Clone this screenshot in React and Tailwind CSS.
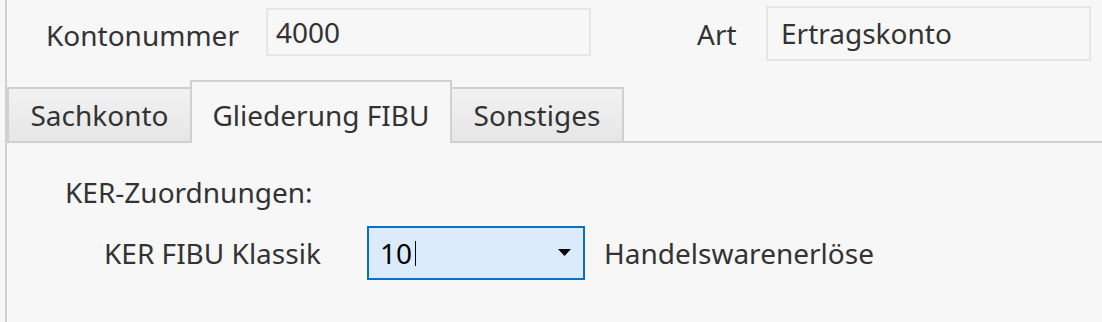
import React from 'react';

const font = { fontFamily: '"Noto Sans", "Open Sans", sans-serif' };

function Tab({ label, active, className }) {
  if (active) {
    return (
      <div className={`h-[63px] border-2 border-b-0 border-[#d0d0d0] bg-[#f7f7f7] flex justify-center pt-[15px] ${className}`}>
        <span className="leading-[36px]">{label}</span>
      </div>
    );
  }
  return (
    <div className={`h-[56px] border-[#d0d0d0] bg-gradient-to-b from-[#f2f2f2] to-[#e6e6e6] flex items-center justify-center ${className}`}>
      <span className="leading-[36px]">{label}</span>
    </div>
  );
}

export default function App() {
  return (
    <div className="w-[1102px] h-[322px] bg-[#f7f7f7] pl-[5px] text-[28px] text-[#333333] overflow-hidden" style={font}>
      <div className="h-full border-l-2 border-[#d0d0d0] flex flex-col">
        {/* Kopfzeile */}
        <div className="h-[80px] flex items-start">
          <div className="ml-[39px] w-[220px] mt-[17px] leading-[36px]">Kontonummer</div>
          <div className="mt-[8px] w-[325px] h-[48px] border-2 border-[#e6e6e6] pl-[8px] leading-[44px]">4000</div>
          <div className="ml-[106px] w-[69px] mt-[16px] leading-[36px]">Art</div>
          <div className="mt-[6px] w-[325px] h-[55px] border-2 border-[#e6e6e6] pl-[13px] leading-[50px]">Ertragskonto</div>
        </div>

        {/* Reiter */}
        <div className="h-[63px] flex items-end">
          <Tab label="Sachkonto" className="w-[183px] border-l-2 border-t-2 border-b-2" />
          <Tab label="Gliederung FIBU" active className="w-[262px]" />
          <Tab label="Sonstiges" className="w-[172px] border-t-2 border-r-2 border-b-2" />
          <div className="flex-1 border-b-2 border-[#d0d0d0]" />
        </div>

        {/* Inhalt */}
        <div className="flex-1 pt-[31px]">
          <div className="ml-[58px] leading-[36px]">KER-Zuordnungen:</div>
          <div className="mt-[16px] flex items-center">
            <div className="ml-[97px] w-[263px] leading-[36px]">KER FIBU Klassik</div>
            <div className="w-[218px] h-[54px] border-2 border-[#0a70c4] bg-[#dcebfc] flex items-center pl-[11px] pr-[12px]">
              <span className="text-black leading-[36px]">10</span>
              <span className="w-px h-[25px] bg-black ml-[3px]" />
              <svg className="ml-auto" width="13" height="8" viewBox="0 0 13 8">
                <path d="M0 0 H13 L6.5 7 Z" fill="#000" />
              </svg>
            </div>
            <div className="ml-[19px] leading-[36px]">Handelswarenerlöse</div>
          </div>
        </div>
      </div>
    </div>
  );
}
